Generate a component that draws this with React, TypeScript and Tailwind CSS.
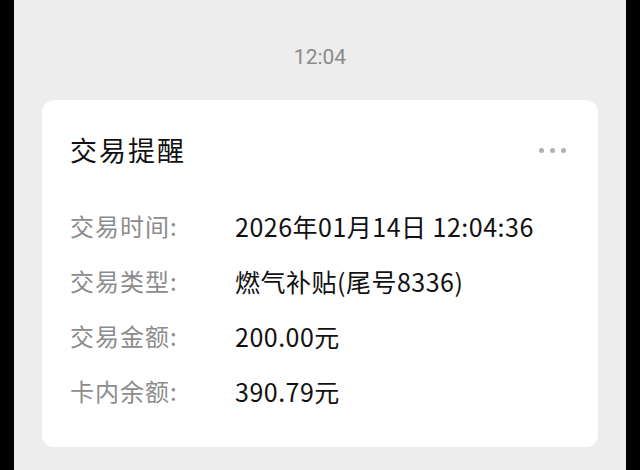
const rows = [
  { label: "交易时间:", value: "2026年01月14日 12:04:36" },
  { label: "交易类型:", value: "燃气补贴(尾号8336)" },
  { label: "交易金额:", value: "200.00元" },
  { label: "卡内余额:", value: "390.79元" },
];

export default function App() {
  return (
    <div
      className="w-[640px] h-[470px] bg-black px-[14px] overflow-hidden"
      style={{ fontFamily: '"Noto Sans CJK SC", "Noto Sans", sans-serif' }}
    >
      <div className="h-full bg-[#ededed] flex flex-col">
        {/* Time stamp */}
        <div
          className="pt-[45px] text-center text-[21px] leading-[24px] text-[#8a8a8a]"
          style={{ fontFamily: 'Roboto, "Noto Sans", sans-serif' }}
        >
          12:04
        </div>

        {/* Message card */}
        <div className="mx-[28px] mt-[31px] bg-white rounded-[12px] pt-[32px] pb-[38px] pl-[28px] pr-[32px]">
          <div className="flex items-center justify-between">
            <h1 className="text-[27px] leading-[36px] tracking-[2px] text-[#111]">交易提醒</h1>
            <div className="flex items-center gap-[6px]">
              <span className="w-[5px] h-[5px] rounded-full bg-[#b0b0b0]" />
              <span className="w-[5px] h-[5px] rounded-full bg-[#b0b0b0]" />
              <span className="w-[5px] h-[5px] rounded-full bg-[#b0b0b0]" />
            </div>
          </div>

          <div className="mt-[40px] flex flex-col gap-[19px]">
            {rows.map((r) => (
              <div key={r.label} className="flex items-center leading-[36px]">
                <span className="w-[165px] shrink-0 text-[24px] text-[#8c8c8c] tracking-[1px]">{r.label}</span>
                <span className="text-[25px] tracking-[0.5px] text-[#111]">{r.value}</span>
              </div>
            ))}
          </div>
        </div>
      </div>
    </div>
  );
}
